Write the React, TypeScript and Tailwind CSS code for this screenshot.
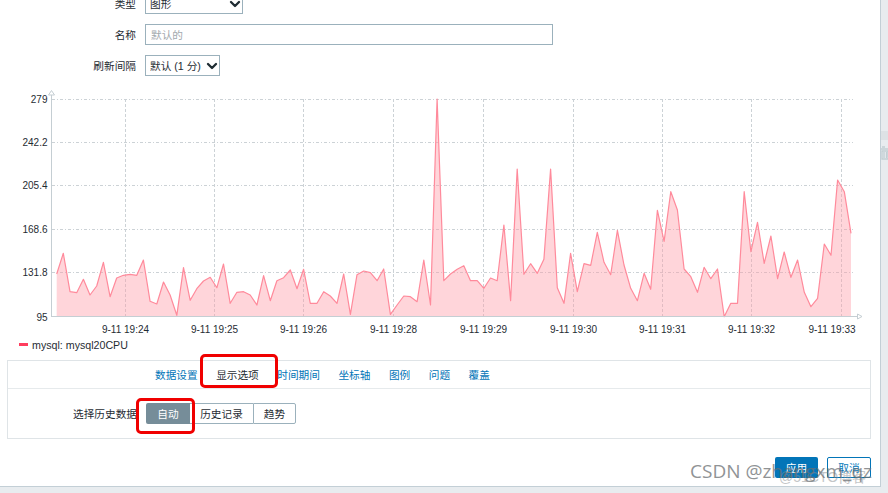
import { ChevronDown } from 'lucide-react'

const FONT = "font-['Liberation_Sans','Noto_Sans_CJK_SC',sans-serif]"

// y values read off the graph, in 3x crop units relative to y=170
const SERIES = [
  312, 250, 365, 368, 328, 375, 348, 277, 380, 324, 316, 313, 316, 270, 394, 402, 336, 375, 436, 293,
  391, 356, 333, 322, 353, 282, 400, 367, 365, 375, 405, 317, 392, 332, 323, 300, 356, 298, 400, 400,
  365, 378, 400, 312, 433, 314, 303, 308, 332, 297, 433, 405, 378, 380, 395, 270, 405, -213,
  332, 312, 298, 287, 332, 332, 355, 324, 332, 165, 392, -3, 313, 281, 310, 268, -3, 353, 400, 250,
  365, 281, 286, 187, 277, 314, 181, 285, 355, 392, 310, 358, 121, 214, 65, 120, 297, 320, 367, 292,
  326, 297, 440, 400, 400, 65, 245, 157, 280, 198, 326, 246, 322, 270, 367, 410, 385, 222, 256, 30,
  65, 190,
]

const X_START = 56.67
const X_END = 851
const BASE_Y = 316.5

const points = SERIES.map((v, i) => {
  const x = X_START + (i * (X_END - X_START)) / (SERIES.length - 1)
  const y = 170 + v / 3
  return `${x.toFixed(1)},${y.toFixed(1)}`
})

const Y_TICKS = [
  { label: '279', y: 99.5 },
  { label: '242.2', y: 142.5 },
  { label: '205.4', y: 185.5 },
  { label: '168.6', y: 229.5 },
  { label: '131.8', y: 272.5 },
]

const X_TICKS = [
  { label: '9-11 19:24', x: 125.5, grid: true },
  { label: '9-11 19:25', x: 214.5, grid: true },
  { label: '9-11 19:26', x: 303.5, grid: true },
  { label: '9-11 19:28', x: 393.5, grid: true },
  { label: '9-11 19:29', x: 483.5, grid: true },
  { label: '9-11 19:30', x: 573.5, grid: true },
  { label: '9-11 19:31', x: 662.5, grid: true },
  { label: '9-11 19:32', x: 751.5, grid: true },
  { label: '9-11 19:33', x: 832, grid: false },
]

const TABS = ['数据设置', '显示选项', '时间期间', '坐标轴', '图例', '问题', '覆盖']

function Graph() {
  return (
    <svg width="880" height="250" viewBox="0 88 880 250" className="block">
      {Y_TICKS.map((t) => (
        <line key={t.label} x1="52" x2="853" y1={t.y} y2={t.y} stroke="#ccd2d6" strokeDasharray="3 2 1 2" />
      ))}
      {X_TICKS.filter((t) => t.grid).map((t) => (
        <line key={t.x} x1={t.x} x2={t.x} y1="99" y2={BASE_Y} stroke="#ccd2d6" strokeDasharray="3 2" />
      ))}
      <line x1="841.5" x2="841.5" y1="99" y2={BASE_Y} stroke="#ccd2d6" strokeDasharray="3 2" />
      <polygon points={`${X_START},${BASE_Y} ${points.join(' ')} ${X_END},${BASE_Y}`} fill="#ff9aa8" fillOpacity="0.42" />
      <polyline points={points.join(' ')} fill="none" stroke="#ff8a9b" strokeWidth="1.2" strokeLinejoin="round" />
      <line x1="51.5" x2="51.5" y1="95" y2="317" stroke="#c5ced3" />
      <line x1="51" x2="857" y1="316.5" y2="316.5" stroke="#c5ced3" />
      <path d="M51.5 90.5 L54.5 95 L48.5 95 Z" fill="#fff" stroke="#c5ced3" />
      <path d="M857.5 314 L862 316.5 L857.5 319 Z" fill="#fff" stroke="#c5ced3" />
      <g fill="#1f2c33" fontSize="10" textAnchor="end">
        {Y_TICKS.map((t) => (
          <text key={t.label} x="47.5" y={t.y + 3}>
            {t.label}
          </text>
        ))}
        <text x="47.5" y="320.500">
          95
        </text>
      </g>
      <g fill="#1f2c33" fontSize="10" textAnchor="middle">
        {X_TICKS.map((t) => (
          <text key={t.label} x={t.x} y="333">
            {t.label}
          </text>
        ))}
      </g>
    </svg>
  )
}

export default function App() {
  return (
    <div className={`${FONT} relative flex h-[493px] w-[888px] overflow-hidden bg-[#e8ecef] text-[10.67px] text-[#1f2c33]`}>
      <div className="h-[487px] w-[881px] shrink-0 border-r border-b border-[#c3cfd6] bg-white">
        {/* Form rows */}
        <div className="-mt-[7px] flex flex-col gap-[10px]">
          <div className="flex items-center gap-[9px]">
            <label className="w-[136px] text-right">类型</label>
            <div className="relative">
              <select defaultValue="graph" className="block h-[21px] w-[98px] appearance-none border border-[#9bb1bc] bg-white pl-[4px] text-[10.67px]">
                <option value="graph">图形</option>
              </select>
              <ChevronDown size={16} strokeWidth={3.5} className="absolute top-[3px] right-0" />
            </div>
          </div>
          <div className="flex items-center gap-[9px]">
            <label className="w-[136px] text-right">名称</label>
            <input
              placeholder="默认的"
              className="h-[21px] w-[408px] border border-[#9bb1bc] bg-white px-[5px] text-[10.67px] placeholder:text-[#a3a9ad]"
            />
          </div>
          <div className="flex items-center gap-[9px]">
            <label className="w-[136px] text-right">刷新间隔</label>
            <div className="relative">
              <select defaultValue="default" className="block h-[21px] w-[75px] appearance-none border border-[#9bb1bc] bg-white pl-[4px] text-[10.67px]">
                <option value="default">默认 (1 分)</option>
              </select>
              <ChevronDown size={16} strokeWidth={3.5} className="absolute top-[3px] right-0" />
            </div>
          </div>
        </div>

        <div className="mt-[12px]">
          <Graph />
        </div>

        {/* Legend */}
        <div className="flex h-[14px] items-center pl-[19px]">
          <span className="h-[3px] w-[9px] -translate-y-[1px] bg-[#ff3d5e]" />
          <span className="ml-[4px] text-[10.67px]">mysql: mysql20CPU</span>
        </div>

        {/* Tabs box */}
        <div className="mt-[8px] ml-[7px] h-[79px] w-[864px] border border-[#dfe4e7]">
          <div className="flex h-[28px] items-center gap-[18.5px] border-b border-[#e6eaec] pl-[147px]">
            {TABS.map((tab) => (
              <span key={tab} className={tab === '显示选项' ? 'text-[#1f2c33]' : 'text-[#0275b8]'}>
                {tab}
              </span>
            ))}
          </div>
          <div className="flex items-center pt-[14px]">
            <span className="w-[129px] text-right">选择历史数据</span>
            <div className="ml-[9px] flex h-[21px]">
              <button className="w-[44px] rounded-l-[2px] bg-[#768d99] text-white">自动</button>
              <button className="w-[63px] border-y border-[#9bb1bc]">历史记录</button>
              <button className="w-[43px] rounded-r-[2px] border border-[#9bb1bc]">趋势</button>
            </div>
          </div>
        </div>

        {/* Footer buttons */}
        <div className="mt-[18px] flex w-[871px] justify-end gap-[9px]">
          <button className="h-[21px] w-[43px] rounded-[2px] bg-[#0275b8] text-white">应用</button>
          <button className="h-[21px] w-[44px] rounded-[2px] border border-[#0275b8] bg-white text-[#0275b8]">取消</button>
        </div>
      </div>

      {/* Sliver of the page behind the dialog */}
      <div className="flex flex-1 flex-col items-stretch">
        <div className="mt-[131px] h-[9px] bg-[#dde2e5]" />
        <svg width="7" height="14" viewBox="0 0 7 14" className="mt-[6px]">
          <path d="M1 1H4M0 3H7M1 5H7V13H1ZM3 6V12M5.500 6V12" fill="none" stroke="#c2ced3" strokeWidth="1.300" />
        </svg>
      </div>

      {/* Red annotations drawn on the screenshot */}
      <div className="absolute top-[354px] left-[200px] h-[34px] w-[78px] rounded-[5px] border-[3px] border-[#f00000]" />
      <div className="absolute top-[398px] left-[136px] h-[36px] w-[59px] rounded-[5px] border-[3px] border-[#f00000]" />

      {/* Watermarks */}
      <span className="absolute top-[468px] left-[779px] text-[14px] leading-[18px] text-[#8a8f93] opacity-50">@51CTO博客</span>
      <span className="absolute top-[458px] left-[690px] font-['Open_Sans',sans-serif] text-[19px] leading-[26px] whitespace-nowrap text-[#6b6f72] opacity-75">
        CSDN @zhangxm_qz
      </span>
    </div>
  )
}
